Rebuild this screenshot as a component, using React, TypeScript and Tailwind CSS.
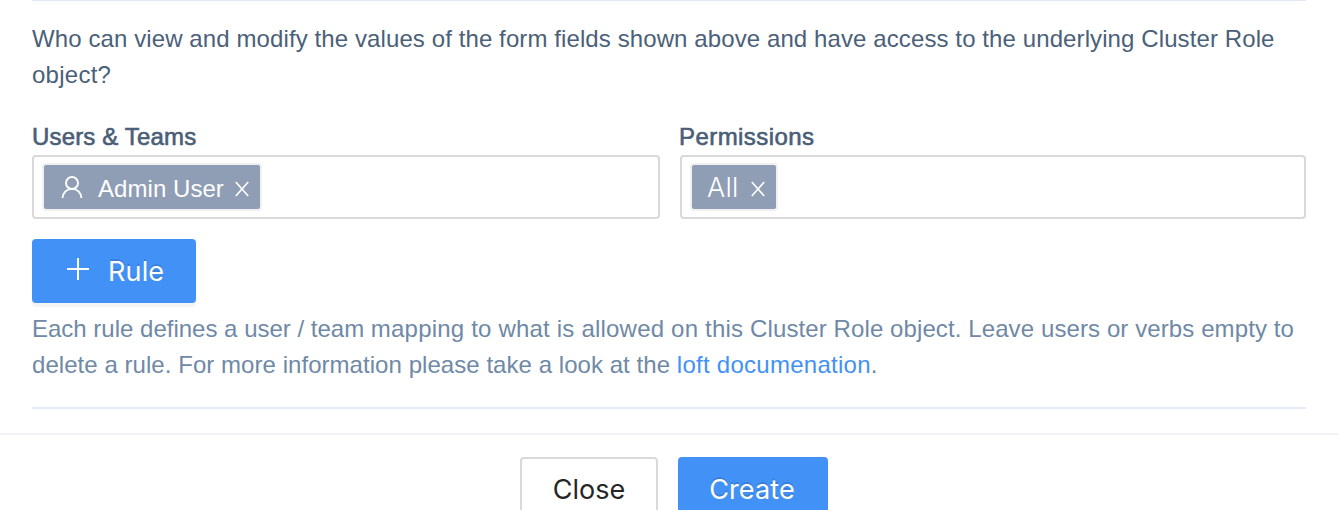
import type { ReactNode } from "react";

const sans = "font-['Liberation_Sans',sans-serif]";
const ui = "font-['Inter',sans-serif]";

function CloseIcon({ className }: { className: string }) {
  return (
    <svg className={className} width="16" height="16" viewBox="0 0 16 16" fill="none" stroke="currentColor" strokeWidth="1.7">
      <path d="M1.8 1L14.2 15M14.2 1L1.8 15" />
    </svg>
  );
}

function UserIcon() {
  return (
    <svg className="shrink-0" width="22" height="24" viewBox="0 0 22 24" fill="none" stroke="currentColor" strokeWidth="1.9">
      <circle cx="11" cy="8" r="6" />
      <path d="M1.6 23C1.9 17.6 5.8 13.9 11 13.9S20.1 17.6 20.4 23" />
    </svg>
  );
}

function Field({ label, className, labelClass, children }: { label: string; className: string; labelClass: string; children: ReactNode }) {
  return (
    <div className={className}>
      <div className={`${labelClass} h-[38px] text-2xl leading-[40px] whitespace-nowrap [-webkit-text-stroke:0.6px_#475b74]`}>{label}</div>
      <div className="flex h-16 rounded-[4px] border-2 border-[#d9d9d9] bg-white pt-1.5 pl-2">{children}</div>
    </div>
  );
}

export default function App() {
  return (
    <div className={`${sans} h-[510px] w-[1338px] overflow-hidden bg-white text-2xl leading-9 text-[#4b6079]`}>
      <main className="mx-8 h-[409px] border-b-2 border-[#e2ebf7]">
        <div className="h-px bg-[#e0e8f6]" />
        <p className="mt-5 whitespace-nowrap">
          <span className="tracking-[0.1px]">Who can view and modify the values of the form fields shown above and have access to the underlying Cluster Role</span>
          <br />
          <span className="tracking-[0.25px]">object?</span>
        </p>
        <div className="mt-6 flex gap-5">
          <Field label="Users & Teams" className="w-[628px]" labelClass="tracking-[0.16px]">
            <div className="flex h-12 w-[220px] items-center rounded-[4px] border-2 border-[#f0f0f0] bg-[#8f9db5] pl-[17px] text-white">
              <UserIcon />
              <span className="ml-[15px] w-[127px] whitespace-nowrap pt-1 tracking-[0.05px]">Admin User</span>
              <CloseIcon className="ml-[9px] mt-1 shrink-0" />
            </div>
          </Field>
          <Field label="Permissions" className="w-[626px]" labelClass="-ml-px tracking-[0.44px]">
            <div className="flex h-12 w-[88px] items-center rounded-[4px] border-2 border-[#f0f0f0] bg-[#8f9db5] pl-[15px] text-white">
              <span className={`${ui} w-[33px] pt-0.5 text-[27px] font-[350] tracking-[0.2px]`}>All</span>
              <CloseIcon className="ml-[10px] mt-1 shrink-0" />
            </div>
          </Field>
        </div>
        <button className={`${ui} mt-5 flex h-16 w-[164px] items-center rounded-[4px] bg-[#4291f7] pl-[35px] text-[27px] text-white shadow-[0_4px_0_rgba(0,0,0,0.045)] [text-shadow:0_-2px_0_rgba(0,0,0,0.12)]`}>
          <svg className="-mt-1 shrink-0" width="22" height="22" viewBox="0 0 22 22" stroke="currentColor" strokeWidth="2">
            <path d="M11 0V22M0 11H22" />
          </svg>
          <span className="ml-[19px] pt-0.5 tracking-[0.15px]">Rule</span>
        </button>
        <p className="mt-2 whitespace-nowrap text-[#6f89a6]">
          Each rule defines a user / team{" "}
          <span className="tracking-[0.2px]">mapping to what is allowed on this </span>
          <span className="tracking-[0.1px]">Cluster Role object. Leave users or verbs empty to</span>
          <br />
          <span className="tracking-[0.05px]">delete a rule. For more information please take a look at the </span>
          <a className="tracking-[0.27px] text-[#4291f7]">loft documenation</a>.
        </p>
      </main>
      <footer className={`${ui} mt-6 flex justify-center gap-5 border-t-2 border-[#eff3f8] pt-[22px] pl-[10px] text-[27px]`}>
        <button className="h-16 w-[138px] rounded-[4px] border-2 border-[#d9d9d9] bg-white pt-0.5 text-[#262626]">Close</button>
        <button className="h-16 w-[150px] rounded-[4px] bg-[#4291f7] pt-0.5 pr-0.5 tracking-[0.1px] text-white [text-shadow:0_-2px_0_rgba(0,0,0,0.12)]">Create</button>
      </footer>
    </div>
  );
}
